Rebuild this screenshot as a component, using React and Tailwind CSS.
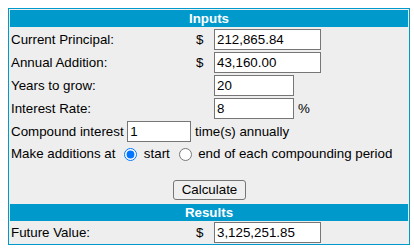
import { useState } from 'react'

const FONT = { fontFamily: '"Liberation Sans", Arial, sans-serif' }

function Header({ children }) {
  return (
    <div className="h-[17px] bg-[#0099cc] text-white font-bold text-[13.33px] leading-[17px] text-center">
      {children}
    </div>
  )
}

function MoneyRow({ label, dollar, value, width = 'w-[107px]', suffix, last }) {
  return (
    <div className={`flex items-start ${last ? 'h-[21px]' : 'h-[22px] pt-px'}`}>
      <div className="w-[186px] pl-px leading-[21px]">{label}</div>
      <div className="w-[18px] leading-[21px]">{dollar ? '$' : ''}</div>
      <input
        type="text"
        defaultValue={value}
        className={`${width} h-[21px] border border-[#767676] bg-white px-[2px] text-[13.33px] text-black outline-none`}
        style={FONT}
      />
      {suffix && <span className="ml-[4px] leading-[21px]">{suffix}</span>}
    </div>
  )
}

export default function App() {
  const [when, setWhen] = useState('start')

  return (
    <div className="min-h-screen bg-white pt-[8px] pl-[8px]" style={FONT}>
      <div className="w-[402px] border border-[#0099cc] bg-[#eeeeee] p-px flex flex-col gap-px text-[13.33px] text-black">
        <Header>Inputs</Header>

        <MoneyRow label="Current Principal:" dollar value="212,865.84" />
        <MoneyRow label="Annual Addition:" dollar value="43,160.00" />
        <MoneyRow label="Years to grow:" value="20" width="w-[80px]" />
        <MoneyRow label="Interest Rate:" value="8" width="w-[80px]" suffix="%" />

        {/* Compound row */}
        <div className="h-[22px] pt-px pl-px flex items-start leading-[21px] whitespace-pre">
          <span>Compound interest </span>
          <input
            type="text"
            defaultValue="1"
            className="w-[64px] h-[21px] border border-[#767676] bg-white px-[2px] text-[13.33px] text-black outline-none"
            style={FONT}
          />
          <span> time(s) annually</span>
        </div>

        {/* Additions row */}
        <div className="h-[22px] pl-px flex items-center whitespace-pre">
          <span>Make additions at </span>
          <input
            type="radio"
            name="when"
            checked={when === 'start'}
            onChange={() => setWhen('start')}
            className="ml-[5px] mr-[3px] w-[13px] h-[13px] accent-[#0075ff]"
          />
          <span> start </span>
          <input
            type="radio"
            name="when"
            checked={when === 'end'}
            onChange={() => setWhen('end')}
            className="ml-[5px] mr-[3px] w-[13px] h-[13px] accent-[#0075ff]"
          />
          <span> end of each compounding period</span>
        </div>

        {/* Calculate */}
        <div className="h-[37px] pt-[14px] flex justify-center">
          <button className="w-[73px] h-[20px] pl-px border border-[#767676] rounded-[3px] bg-[#efefef] text-[13.33px] leading-[18px] text-black">
            Calculate
          </button>
        </div>

        <Header>Results</Header>
        <MoneyRow label="Future Value:" dollar value="3,125,251.85" last />
      </div>
    </div>
  )
}
